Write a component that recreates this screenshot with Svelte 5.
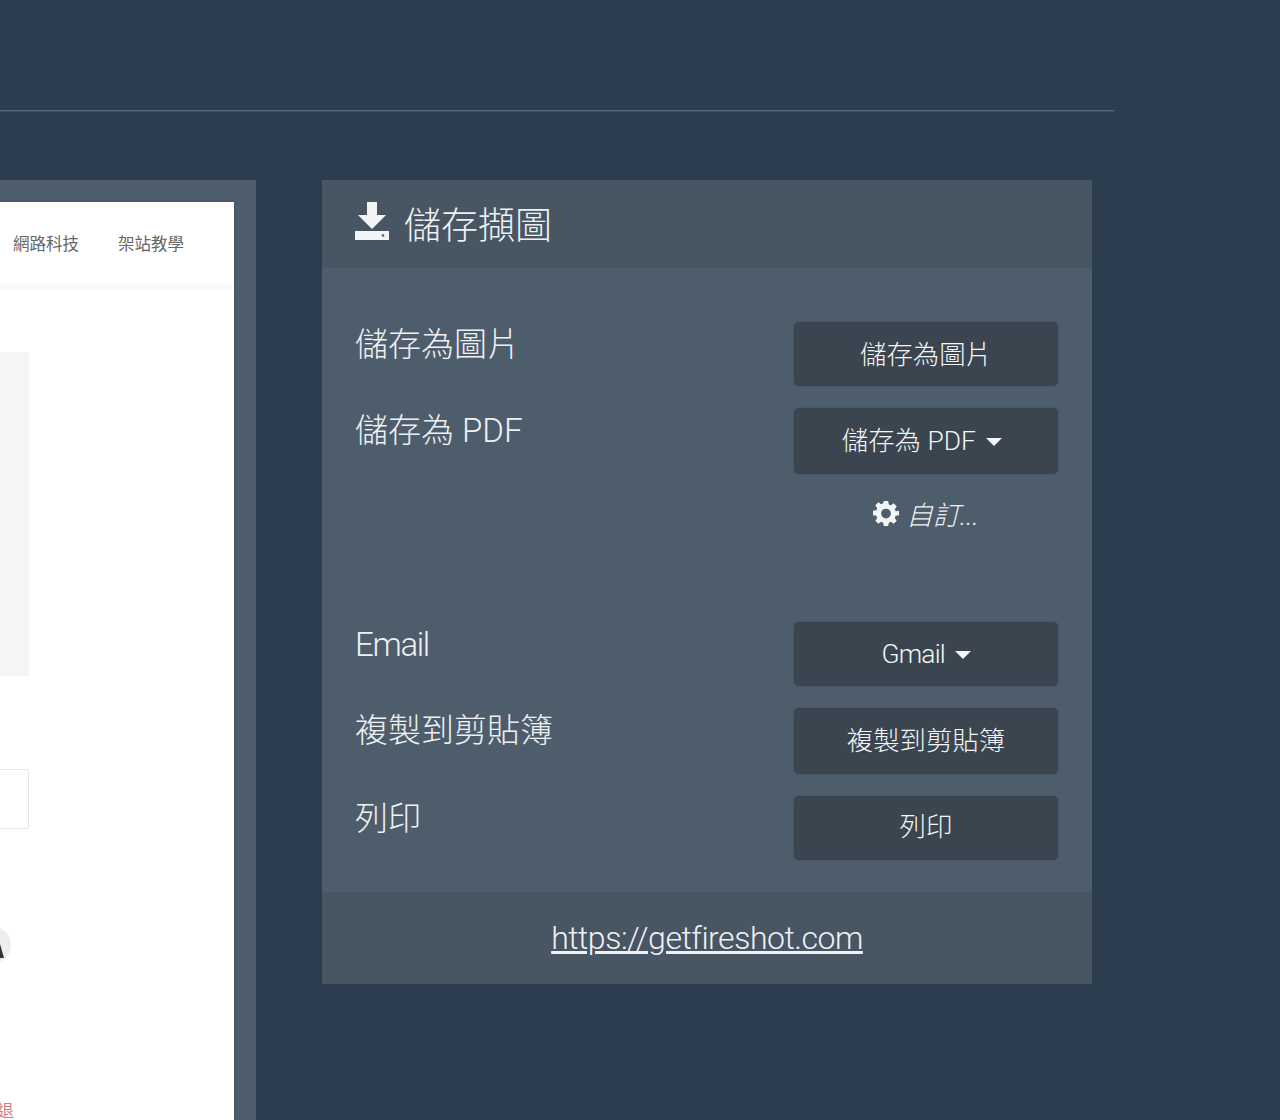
<script>
	let rows = [
		{ label: '儲存為圖片', button: '儲存為圖片' },
		{ label: '儲存為 PDF', button: '儲存為 PDF', caret: true, custom: true },
		{ label: 'Email', button: 'Gmail', caret: true, latin: true },
		{ label: '複製到剪貼簿', button: '複製到剪貼簿' },
		{ label: '列印', button: '列印' }
	];
</script>

<div class="page">
	<div class="rule"></div>
	<div class="columns">
		<div class="preview">
			<div class="sheet">
				<div class="nav">
					<span>網路科技</span>
					<span>架站教學</span>
				</div>
				<div class="block"></div>
				<div class="field"></div>
				<div class="avatar">
					<svg viewBox="0 0 4 14" width="4" height="14">
						<path d="M0 0l4 14H0z" fill="#333" />
					</svg>
				</div>
				<div class="logout">退</div>
			</div>
		</div>

		<div class="panel">
			<div class="panel-head">
				<svg class="save-icon" viewBox="0 0 34 38" width="34" height="38">
					<path d="M12 0h10v13h9L17 27 3 13h9z" fill="#f2f4f5" />
					<path d="M0 29h34v9H0z" fill="#f2f4f5" />
					<circle cx="28" cy="33.500" r="1.300" fill="#4e5d6c" />
				</svg>
				<h2>儲存擷圖</h2>
			</div>

			<div class="panel-body">
				{#each rows as row}
					<div class="row" class:custom-row={row.custom} class:latin={row.latin}>
						<div class="label">{row.label}</div>
						<div class="action">
							<button>
								{row.button}
								{#if row.caret}<span class="caret"></span>{/if}
							</button>
							{#if row.custom}
								<div class="custom">
									<svg viewBox="0 0 24 24" width="26" height="26">
										<path fill-rule="evenodd" d="M10 1h4l.6 3.100 1.900.8 2.600-1.800 2.800 2.800-1.800 2.600.8 1.900L24 10v4l-3.100.6-.8 1.900 1.800 2.600-2.800 2.800-2.600-1.800-1.900.8L14 24h-4l-.6-3.100-1.900-.8-2.600 1.800-2.800-2.800 1.800-2.600-.8-1.900L0 14v-4l3.100-.6.8-1.900L2.100 4.900l2.800-2.800 2.600 1.800 1.900-.8zM12 8a4.500 4.500 0 1 0 0 9 4.500 4.500 0 0 0 0-9z" fill="#f2f4f5" />
									</svg>
									<em>自訂...</em>
								</div>
							{/if}
						</div>
					</div>
				{/each}
			</div>

			<div class="panel-foot">
				<a href="https://getfireshot.com">https://getfireshot.com</a>
			</div>
		</div>
	</div>
</div>

<style>
	:global(body) {
		margin: 0;
		background: #2c3d50;
	}

	.page {
		height: 1120px;
		overflow: hidden;
		font-family: "Roboto", "Noto Sans CJK TC", sans-serif;
		font-weight: 300;
		color: #eef1f3;
	}

	.rule {
		width: 1114px;
		height: 1px;
		margin-top: 110px;
		background: #5a6a78;
		box-shadow: 0 1px #3d4e5f;
	}

	.columns {
		display: flex;
		align-items: flex-start;
		gap: 66px;
		margin-top: 69px;
	}

	.preview {
		width: 256px;
		height: 940px;
		padding: 22px 22px 0 0;
		box-sizing: border-box;
		background: #4e5d6c;
		flex: none;
	}

	.sheet {
		height: 918px;
		background: #fff;
		overflow: hidden;
		font-weight: 400;
		box-shadow: 0 0 4px rgba(0, 0, 0, 0.15);
	}

	.nav {
		display: flex;
		gap: 39px;
		height: 88px;
		padding: 33px 0 0 13px;
		box-sizing: border-box;
		border-bottom: 6px solid #fafafa;
		font-size: 16.500px;
		line-height: 20px;
		color: #666;
	}

	.block {
		width: 29px;
		height: 324px;
		margin-top: 62px;
		background: #f5f5f5;
	}

	.field {
		width: 28px;
		height: 58px;
		margin-top: 93px;
		border: 1px solid #e6e6e6;
		border-left: none;
		border-radius: 0 2px 2px 0;
	}

	.avatar {
		display: flex;
		align-items: flex-end;
		width: 36px;
		height: 36px;
		margin: 98px 0 0 -25px;
		padding: 0 0 5px 25px;
		box-sizing: border-box;
		border-radius: 50%;
		background: #eee;
	}

	.logout {
		width: 14px;
		margin-top: 139px;
		display: flex;
		justify-content: flex-end;
		white-space: nowrap;
		font-size: 16.500px;
		line-height: 20px;
		color: #d9777a;
	}

	.panel {
		width: 770px;
		flex: none;
		background: #4e5d6c;
	}

	.panel-head {
		display: flex;
		align-items: center;
		gap: 15px;
		height: 87px;
		padding-left: 33px;
		background: #485563;
		border-bottom: 1px solid #4a5765;
	}

	.save-icon {
		margin-top: -6px;
	}

	h2 {
		margin: 6px 0 0;
		font-size: 37px;
		font-weight: 300;
		line-height: 44px;
	}

	.panel-body {
		padding: 54px 34px 32px 33px;
	}

	.row {
		display: flex;
		justify-content: space-between;
		margin-bottom: 22px;
	}

	.row:last-child {
		margin-bottom: 0;
	}

	.custom-row {
		margin-bottom: 70px;
	}

	.label {
		margin-top: 1px;
		font-size: 33px;
		line-height: 44px;
	}

	.latin .label {
		letter-spacing: -0.04em;
	}

	.latin button {
		letter-spacing: -0.03em;
	}

	.action {
		width: 264px;
	}

	button {
		display: block;
		width: 100%;
		height: 64px;
		padding: 0 0 4px;
		border: 1px solid #38434f;
		border-radius: 5px;
		background: #3b4550;
		box-shadow: 0 0 2px rgba(44, 61, 80, 0.6);
		color: #f4f6f7;
		font-family: inherit;
		font-size: 26.400px;
		font-weight: 300;
	}

	.row:nth-child(even) button {
		height: 66px;
		padding-bottom: 6px;
	}

	.row.latin button {
		padding-bottom: 0;
	}

	.row:last-child button {
		padding-bottom: 7px;
	}

	.row.custom-row button {
		padding-right: 8px;
	}

	.caret {
		display: inline-block;
		margin-left: 4px;
		vertical-align: 4px;
		border-top: 8px solid #f4f6f7;
		border-left: 8px solid transparent;
		border-right: 8px solid transparent;
	}

	.custom {
		display: flex;
		justify-content: center;
		align-items: center;
		gap: 7px;
		height: 78px;
		font-size: 27px;
	}

	.panel-foot {
		display: flex;
		justify-content: center;
		align-items: center;
		height: 92px;
		background: #485563;
		font-size: 32px;
		letter-spacing: -0.015em;
	}

	a {
		color: #eef1f3;
	}
</style>
